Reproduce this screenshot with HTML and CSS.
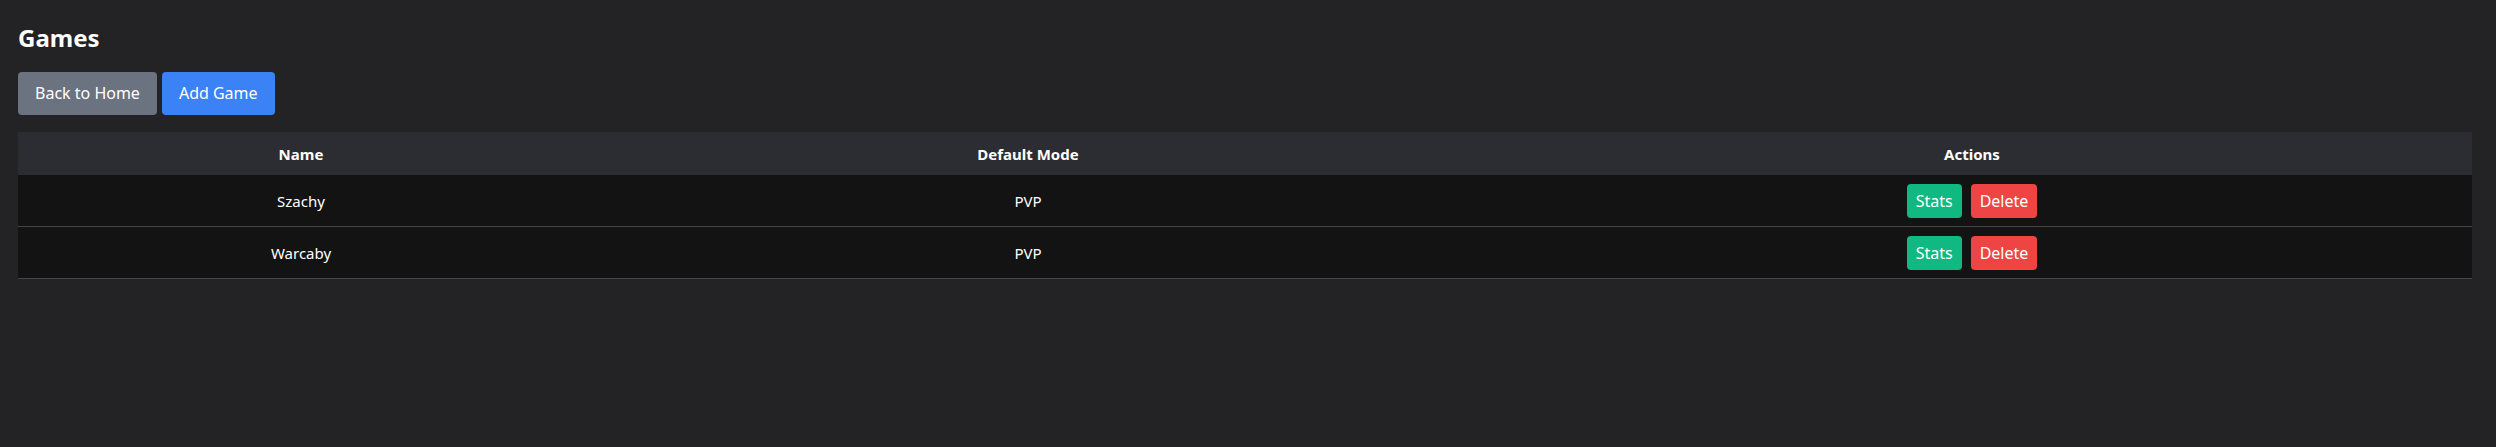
FILE: index.html
```html
<!DOCTYPE html>
<html lang="en">
<head>
<meta charset="utf-8">
<title>Games</title>
<link rel="stylesheet" href="styles.css">
</head>
<body>
<div class="page">
  <h1 class="title">Games</h1>
  <div class="toolbar">
    <button class="btn btn-gray">Back to Home</button>
    <button class="btn btn-blue">Add Game</button>
  </div>
  <table class="games">
    <colgroup>
      <col class="c-name">
      <col class="c-mode">
      <col class="c-actions">
    </colgroup>
    <thead>
      <tr><th>Name</th><th>Default Mode</th><th>Actions</th></tr>
    </thead>
    <tbody>
      <tr>
        <td>Szachy</td>
        <td>PVP</td>
        <td><div class="actions"><button class="sbtn sbtn-green">Stats</button><button class="sbtn sbtn-red">Delete</button></div></td>
      </tr>
      <tr>
        <td>Warcaby</td>
        <td>PVP</td>
        <td><div class="actions"><button class="sbtn sbtn-green">Stats</button><button class="sbtn sbtn-red">Delete</button></div></td>
      </tr>
    </tbody>
  </table>
</div>
</body>
</html>
```

FILE: styles.css
```css
html, body {
  margin: 0;
  padding: 0;
  background: #232325;
  color: #ffffff;
  font-family: "Noto Sans", "Open Sans", sans-serif;
}
.page {
  padding: 22px 24px 0 18px;
}
.title {
  margin: 0;
  font-size: 24px;
  line-height: 32px;
  font-weight: 700;
}
.toolbar {
  margin-top: 18px;
  display: flex;
  gap: 5px;
}
.btn {
  height: 43px;
  padding: 0 17px;
  border: none;
  border-radius: 4px;
  color: #fff;
  font-family: inherit;
  font-size: 16px;
  line-height: 43px;
}
.btn-gray { background: #6b7280; }
.btn-blue { background: #3b82f6; }
.games {
  margin-top: 17px;
  width: 100%;
  border-collapse: collapse;
  table-layout: fixed;
  font-size: 15px;
}
.c-name { width: 566px; }
.c-mode { width: 888px; }
.c-actions { width: 1000px; }
.games th {
  background: #2c2d32;
  height: 43px;
  padding: 0;
  font-weight: 700;
  text-align: center;
}
.games td {
  background: #131313;
  height: 51px;
  padding: 0;
  text-align: center;
  border-bottom: 1px solid #444548;
}
.actions {
  display: flex;
  justify-content: center;
  gap: 9px;
}
.sbtn {
  height: 34px;
  padding: 0 9px;
  border: none;
  border-radius: 4px;
  color: #fff;
  font-family: inherit;
  font-size: 16px;
  line-height: 34px;
}
.sbtn-green { background: #10b981; }
.sbtn-red { background: #ef4444; }
```
